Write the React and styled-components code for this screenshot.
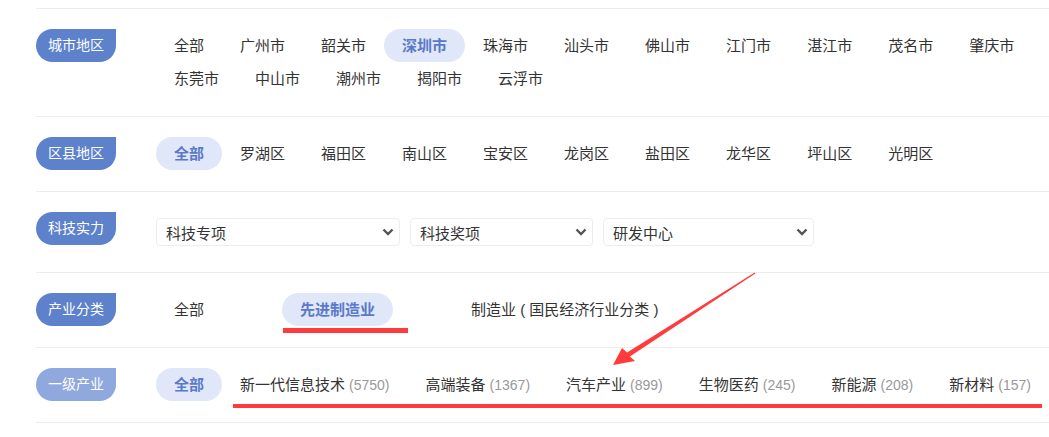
import React from 'react';
import styled, { createGlobalStyle } from 'styled-components';

const GlobalStyle = createGlobalStyle`
  body {
    margin: 0;
    background: #fff;
    font-family: "Liberation Sans", "Noto Sans CJK SC", sans-serif;
  }
`;

const Page = styled.div`
  position: relative;
  width: 1049px;
  height: 437px;
  overflow: hidden;
  background: #fff;
`;

const Filters = styled.div`
  margin: 8px 0 0 36px;
  border-top: 1px solid #ececec;
`;

const Row = styled.div`
  display: flex;
  align-items: flex-start;
  padding: 20px 0 21px;
  border-bottom: 1px solid #ececec;
`;

const Label = styled.div`
  flex-shrink: 0;
  width: 80px;
  height: 33px;
  margin-right: 40px;
  border-radius: 17px 0 17px 17px;
  background: ${(p) => (p.$faded ? '#8fa8dd' : '#5e81cc')};
  color: #fff;
  font-size: 14px;
  line-height: 33px;
  text-align: center;
`;

const Options = styled.div`
  display: flex;
  flex-wrap: ${(p) => (p.$nowrap ? 'nowrap' : 'wrap')};
  gap: 0 ${(p) => p.$gap || 0}px;
  flex: 1;
  min-width: 0;
`;

const Option = styled.span`
  flex-shrink: 0;
  height: 33px;
  padding: 0 18px;
  border-radius: 17px;
  font-size: 15px;
  line-height: 33px;
  white-space: pre;
  cursor: pointer;
  color: ${(p) => (p.$active ? '#5a79c9' : '#333')};
  font-weight: ${(p) => (p.$active ? 700 : 400)};
  background: ${(p) => (p.$active ? '#e0e7f8' : 'transparent')};
`;

const Count = styled.span`
  margin-left: 4px;
  font-size: 14px;
  color: #999;
`;

const Selects = styled.div`
  display: flex;
  gap: 10px;
  margin: 6px 0 5px;
`;

const Picker = styled.div`
  box-sizing: border-box;
  display: flex;
  align-items: center;
  justify-content: space-between;
  width: ${(p) => p.$width}px;
  height: 28px;
  padding: 0 5px 0 9px;
  border: 1px solid #ededed;
  border-radius: 4px;
  font-size: 15px;
  color: #333;
`;

const Annotations = styled.svg`
  position: absolute;
  left: 0;
  top: 0;
  pointer-events: none;
`;

const cities = ['全部', '广州市', '韶关市', '深圳市', '珠海市', '汕头市', '佛山市', '江门市', '湛江市', '茂名市', '肇庆市', '东莞市', '中山市', '潮州市', '揭阳市', '云浮市'];
const districts = ['全部', '罗湖区', '福田区', '南山区', '宝安区', '龙岗区', '盐田区', '龙华区', '坪山区', '光明区'];
const pickers = [
  { name: '科技专项', width: 244 },
  { name: '科技奖项', width: 183 },
  { name: '研发中心', width: 211 },
];
const categories = ['全部', '先进制造业', '制造业 ( 国民经济行业分类 )'];
const industries = [
  { name: '全部' },
  { name: '新一代信息技术', count: 5750 },
  { name: '高端装备', count: 1367 },
  { name: '汽车产业', count: 899 },
  { name: '生物医药', count: 245 },
  { name: '新能源', count: 208 },
  { name: '新材料', count: 157 },
];

const Chevron = () => (
  <svg width="12" height="8" viewBox="0 0 12 8">
    <path d="M1.5 1.5 L6 6 L10.5 1.5" fill="none" stroke="#555" strokeWidth="2.4" />
  </svg>
);

const App = () => (
  <Page>
    <GlobalStyle />
    <Filters>
      <Row>
        <Label>城市地区</Label>
        <Options>
          {cities.map((c) => (
            <Option key={c} $active={c === '深圳市'}>{c}</Option>
          ))}
        </Options>
      </Row>
      <Row>
        <Label>区县地区</Label>
        <Options>
          {districts.map((d) => (
            <Option key={d} $active={d === '全部'}>{d}</Option>
          ))}
        </Options>
      </Row>
      <Row>
        <Label>科技实力</Label>
        <Selects>
          {pickers.map((p) => (
            <Picker key={p.name} $width={p.width}>
              {p.name}
              <Chevron />
            </Picker>
          ))}
        </Selects>
      </Row>
      <Row>
        <Label>产业分类</Label>
        <Options $gap={60}>
          {categories.map((c) => (
            <Option key={c} $active={c === '先进制造业'}>{c}</Option>
          ))}
        </Options>
      </Row>
      <Row>
        <Label $faded>一级产业</Label>
        <Options $nowrap>
          {industries.map((i) => (
            <Option key={i.name} $active={!i.count}>
              {i.name}
              {i.count && <Count>({i.count})</Count>}
            </Option>
          ))}
        </Options>
      </Row>
    </Filters>

    {/* red markup drawn on top of the filters */}
    <Annotations width="1049" height="437">
      <rect x="283" y="328" width="125" height="5" fill="#ff3b3b" />
      <rect x="233" y="404" width="809" height="4" fill="#ff3b3b" />
      <polygon
        points="755.3,273.4 629.9,356.6 635,361 613,365 622,348 627.1,352.4 754.7,272.6"
        fill="#ff3b3b"
      />
    </Annotations>
  </Page>
);

export default App;
